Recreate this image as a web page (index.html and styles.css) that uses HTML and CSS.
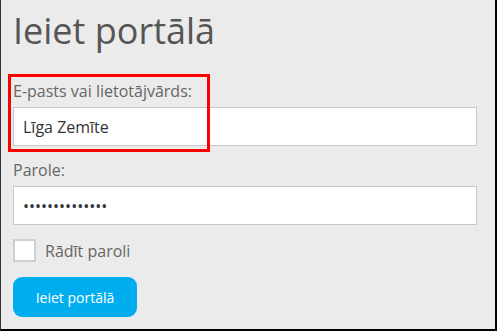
FILE: index.html
```html
<!DOCTYPE html>
<html lang="lv">
<head>
  <meta charset="UTF-8" />
  <title>Ieiet portālā</title>
  <link rel="stylesheet" href="styles.css">
</head>
<body>
  <div class="frame">
    <h1 class="title">Ieiet portālā</h1>

    <form class="login">
      <div class="field field-user">
        <label for="user">E-pasts vai lietotājvārds:</label>
        <input id="user" type="text" value="Līga Zemīte" />
        <!-- highlight marker -->
        <div class="highlight"></div>
      </div>

      <div class="field">
        <label for="pass">Parole:</label>
        <input id="pass" type="password" value="slepenaparole1" />
      </div>

      <label class="show-pass">
        <input type="checkbox" />
        <span>Rādīt paroli</span>
      </label>

      <button type="button" class="submit">Ieiet portālā</button>
    </form>
  </div>
</body>
</html>
```

FILE: styles.css
```css
html, body {
  margin: 0;
  padding: 0;
  background: #ebebeb;
  font-family: 'Open Sans', 'DejaVu Sans', sans-serif;
}

/* page frame with the dark edges */
.frame {
  box-sizing: border-box;
  height: 331px;
  padding: 0 18px 0 12px;
  border-left: 1px solid #333;
  border-right: 2px solid #000;
  border-bottom: 2px solid #000;
  overflow: hidden;
}

.title {
  margin: 0;
  padding-top: 9px;
  font-size: 36px;
  font-weight: 400;
  line-height: 43px;
  color: #555;
}

.login {
  display: flex;
  flex-direction: column;
  align-items: flex-start;
  margin-top: 28px;
}

.field {
  position: relative;
  display: flex;
  flex-direction: column;
  align-self: stretch;
  margin-bottom: 13px;
}

.field label {
  font-size: 16px;
  line-height: 22px;
  color: #666;
  margin-bottom: 5px;
}

.field input {
  box-sizing: border-box;
  height: 39px;
  margin: 0;
  padding: 0 9px;
  border: 1px solid #c8c8c8;
  background: #fff;
  font-family: inherit;
  font-size: 16px;
  color: #333;
  outline: none;
}

/* red annotation box over the first field */
.highlight {
  position: absolute;
  left: -5px;
  top: -6px;
  width: 202px;
  height: 78px;
  box-sizing: border-box;
  border: 3px solid #f00;
  pointer-events: none;
}

.show-pass {
  display: flex;
  align-items: center;
  gap: 9px;
  margin-top: 1px;
  font-size: 16px;
  line-height: 22px;
  color: #666;
}

.show-pass input {
  appearance: none;
  box-sizing: border-box;
  width: 23px;
  height: 23px;
  margin: 0;
  border: 2px solid #cfcfcf;
  background: #fff;
}

.submit {
  width: 124px;
  height: 40px;
  margin-top: 15px;
  border: none;
  border-radius: 9px;
  background: #00aeef;
  color: #fff;
  font-family: inherit;
  font-size: 14px;
  cursor: pointer;
}
```
